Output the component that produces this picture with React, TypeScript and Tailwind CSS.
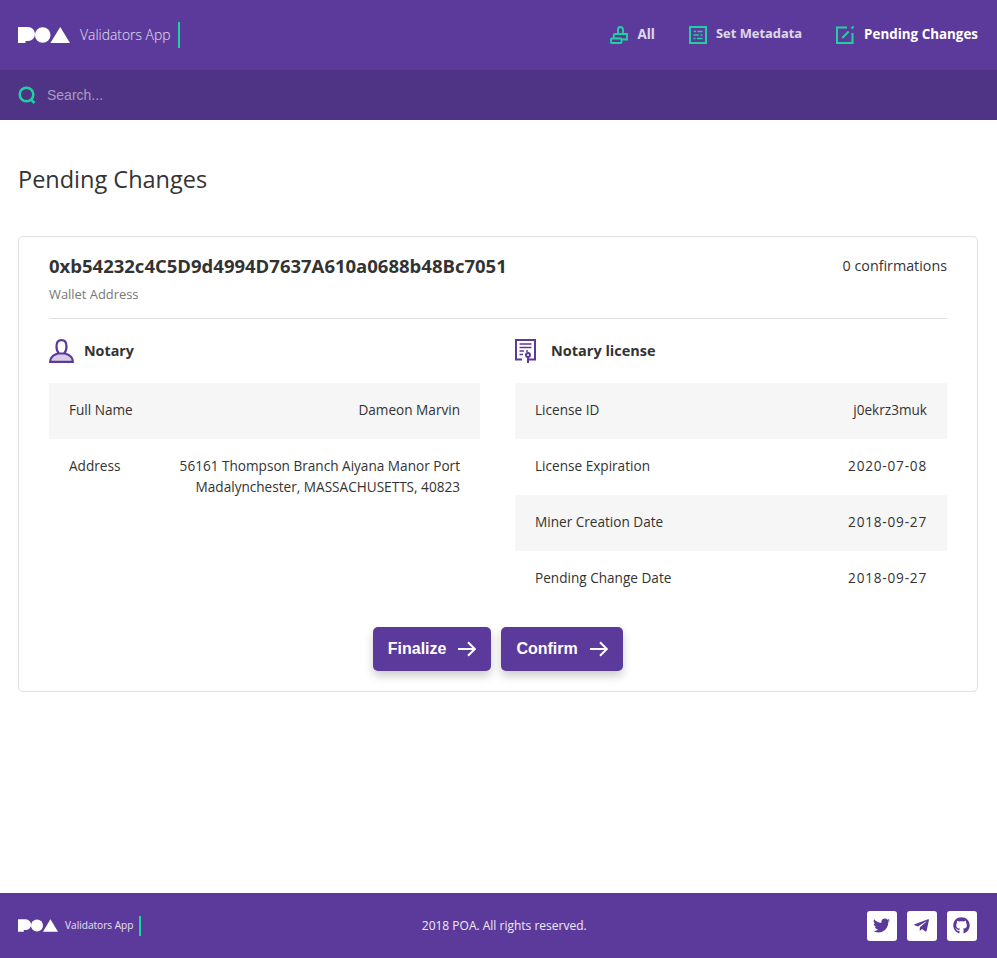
import { FaTwitter, FaTelegramPlane, FaGithub } from 'react-icons/fa';

const font = "font-['Open_Sans',sans-serif]";

const Logo = ({ className }: { className: string }) => (
  <svg viewBox="0 0 52 16" className={className} fill="#fff">
    <path d="M0 0H10a7 7 0 0 1 0 14H7.500V16H0Z" />
    <circle cx="24.700" cy="8" r="7.800" />
    <path d="M42.200 0L52 16H32.400Z" />
  </svg>
);

const Brand = ({ small }: { small?: boolean }) => (
  <div className="flex items-center">
    <Logo className={small ? 'w-[40px] h-[13px]' : 'w-[52px] h-[16px]'} />
    <span
      className={
        small
          ? 'ml-[7px] text-[10.100px] font-normal text-white/85'
          : 'ml-[10px] text-[13.900px] font-light text-white/85'
      }
    >
      Validators App
    </span>
    <span className={small ? 'ml-[6px] w-[2px] h-[20px] bg-[#19d3a2]' : 'ml-[8px] w-[2px] h-[26px] bg-[#19d3a2]'} />
  </div>
);

const IconAll = () => (
  <svg viewBox="0 0 18 18" className="w-[18px] h-[18px]" fill="none" stroke="#1fd1a0" strokeWidth="1.900">
    <rect x="1" y="12.500" width="10.500" height="4.500" rx="0.800" />
    <path d="M8 8V3.500a2.500 2.500 0 0 1 5 0V8" />
    <path d="M3.800 12.500V9.200A1.200 1.200 0 0 1 5 8h12v5.500h-5.500" />
  </svg>
);

const IconMeta = () => (
  <svg viewBox="0 0 18 18" className="w-[18px] h-[18px]" fill="none" stroke="#1fd1a0" strokeWidth="2">
    <rect x="1" y="1" width="16" height="16" />
    <path d="M4.500 5.500h2.500M8.500 5.500h5M4.500 9h5.500M11.500 9h2M4.500 12.500h2M8 12.500h5.500" strokeWidth="1.500" />
  </svg>
);

const IconPending = () => (
  <svg viewBox="0 0 18 18" className="w-[18px] h-[18px]" fill="none" stroke="#1fd1a0" strokeWidth="2">
    <path d="M11 1.500H1v15.500h15.500V7" />
    <path d="M6.200 12l6.500-6.500" />
    <path d="M15.500 2.500l2-2" />
  </svg>
);

const IconNotary = () => (
  <svg viewBox="0 0 25 24" className="w-[25px] h-[24px]" fill="none" stroke="#5c3a9b" strokeWidth="2.200">
    <path d="M1.500 23c0-6 3-7.500 7-9h7c4 1.500 7 3 7 9Z" fill="#d8cde9" stroke="none" />
    <path d="M7.500 7.500C7.500 3 9.500 1.200 12.500 1.200s5 1.800 5 6.300c0 3-1 5.500-2.500 7h-5C8.500 13 7.500 10.500 7.500 7.500Z" />
    <path d="M9.500 14C7 16 1.200 16 1.200 22.800h22.600C23.800 16 18 16 15.500 14" />
  </svg>
);

const IconLicense = () => (
  <svg viewBox="0 0 21 24" className="w-[21px] h-[24px]" fill="none" stroke="#5c3a9b" strokeWidth="2">
    <path d="M7 20.500H1V1h19v19.500h-6" />
    <path d="M4.500 5h12M4.500 8.500h12M4.500 12h4.500M11 12h2M4.500 15.500h3.500" strokeWidth="1.500" />
    <circle cx="13" cy="16" r="2" />
    <path d="M13 18v6" />
  </svg>
);

const Arrow = () => (
  <svg viewBox="0 0 18 16" className="w-[18px] h-[16px] ml-[12px]" fill="none" stroke="#fff" strokeWidth="2">
    <path d="M0 8h16.500M10 1.200L16.800 8L10 14.800" />
  </svg>
);

const Row = ({ label, value, shaded, numeric }: { label: string; value: string; shaded?: boolean; numeric?: boolean }) => (
  <div className={`flex justify-between min-h-[56px] px-[20px] pt-[16px] pb-[18px] text-[13.600px] leading-[21px] text-[#333] ${shaded ? 'bg-[#f6f6f6]' : ''}`}>
    <span className="shrink-0">{label}</span>
    <span className={`text-right max-w-[290px] ${numeric ? 'tracking-[0.800px]' : ''}`}>{value}</span>
  </div>
);

export default function App() {
  return (
    <div className={`min-h-[958px] flex flex-col bg-white ${font}`}>
      <header className="bg-[#5c3a9b]">
        <div className="h-[70px] pl-[18px] pr-[19px] flex items-center justify-between">
          <Brand />
          <nav className="flex items-center gap-[34px] font-bold">
            <a className="flex items-center gap-[10px] text-[13.400px] text-white/80"><IconAll /><span className="pb-[2px]">All</span></a>
            <a className="flex items-center gap-[9px] text-[12.900px] text-white/80"><IconMeta /><span className="pb-[2px]">Set Metadata</span></a>
            <a className="flex items-center gap-[10px] text-[13.400px] text-white"><IconPending /><span className="pb-[2px]">Pending Changes</span></a>
          </nav>
        </div>
        <div className="h-[50px] px-[18px] flex items-center bg-[#4f3486]">
          <svg viewBox="0 0 18 18" className="w-[18px] h-[18px]" fill="none" stroke="#1fd1a0" strokeWidth="2.500">
            <circle cx="8.500" cy="8.500" r="6.800" />
            <path d="M13 13.500l3.500 3.500" />
          </svg>
          <input
            placeholder="Search..."
            className="ml-[11px] flex-1 bg-transparent text-[14px] font-['Liberation_Sans',sans-serif] outline-none placeholder:text-white/50"
          />
        </div>
      </header>

      <main className="flex-1 pl-[18px] pr-[19px]">
        <h1 className="mt-[43px] text-[23.500px] leading-[32px] text-[#333]">Pending Changes</h1>
        <section className="mt-[41px] border border-[#e0e0e0] rounded-[5px] px-[30px] pt-[17px] pb-[20px]">
          <div className="flex justify-between border-b border-[#e0e0e0] h-[65px]">
            <div>
              <div className="text-[18.500px] leading-[24px] font-bold text-[#333]">0xb54232c4C5D9d4994D7637A610a0688b48Bc7051</div>
              <div className="mt-[7px] text-[12.900px] leading-[18px] text-[#777]">Wallet Address</div>
            </div>
            <div className="pt-[1px] text-[14.300px] leading-[22px] text-[#333]">0 confirmations</div>
          </div>
          <div className="mt-[19px] grid grid-cols-[431px_1fr] gap-x-[35px]">
            <div>
              <div className="flex items-center gap-[10px] h-[26px] text-[14.300px] font-bold text-[#333]"><IconNotary />Notary</div>
              <div className="mt-[19px]">
                <Row shaded label="Full Name" value="Dameon Marvin" />
                <Row label="Address" value="56161 Thompson Branch Aiyana Manor Port Madalynchester, MASSACHUSETTS, 40823" />
              </div>
            </div>
            <div>
              <div className="flex items-center gap-[15px] h-[26px] text-[14.500px] font-bold text-[#333]"><IconLicense />Notary license</div>
              <div className="mt-[19px]">
                <Row shaded label="License ID" value="j0ekrz3muk" />
                <Row numeric label="License Expiration" value="2020-07-08" />
                <Row numeric shaded label="Miner Creation Date" value="2018-09-27" />
                <Row numeric label="Pending Change Date" value="2018-09-27" />
              </div>
            </div>
          </div>
          <div className="mt-[20px] flex justify-center gap-[10px] font-['Liberation_Sans',sans-serif]">
            <button className="h-[44px] px-[15px] flex items-center rounded-[5px] bg-[#5c3a9b] text-white text-[16px] font-bold shadow-[0_5px_10px_rgba(0,0,0,0.2)]">Finalize<Arrow /></button>
            <button className="h-[44px] pl-[15px] pr-[15.500px] flex items-center rounded-[5px] bg-[#5c3a9b] text-white text-[16px] font-bold shadow-[0_5px_10px_rgba(0,0,0,0.2)]">Confirm<Arrow /></button>
          </div>
        </section>
      </main>

      <footer className="h-[65px] pl-[18px] pr-[20px] bg-[#5c3a9b] flex items-center justify-between">
        <Brand small />
        <p className="text-[12px] text-white/90">2018 POA. All rights reserved.</p>
        <div className="flex gap-[10px]">
          {[FaTwitter, FaTelegramPlane, FaGithub].map((Icon, i) => (
            <a key={i} className="w-[30px] h-[30px] bg-white rounded-[3px] flex items-center justify-center text-[#5c3a9b] text-[17px]">
              <Icon />
            </a>
          ))}
        </div>
      </footer>
    </div>
  );
}
